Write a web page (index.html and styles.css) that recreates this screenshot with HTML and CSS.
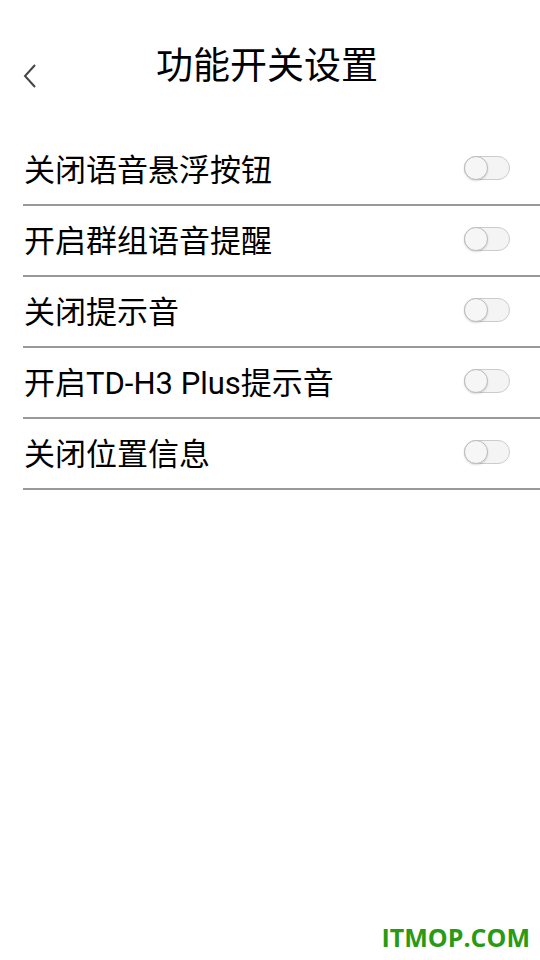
FILE: index.html
```html
<html>

<head>
  <meta charset="utf8">
  <title>功能开关设置</title>
  <link rel="stylesheet" href="styles.css">
</head>

<body>
  <header class="bar">
    <span class="back">
      <svg width="16" height="26" viewBox="0 0 16 26"><path d="M13 2 L3 13 L13 24" fill="none" stroke="#444" stroke-width="2"/></svg>
    </span>
    <h1>功能开关设置</h1>
  </header>
  <ul class="list">
    <li><span>关闭语音悬浮按钮</span><i class="switch"></i></li>
    <li><span>开启群组语音提醒</span><i class="switch"></i></li>
    <li><span>关闭提示音</span><i class="switch"></i></li>
    <li><span>开启TD-H3 Plus提示音</span><i class="switch"></i></li>
    <li><span>关闭位置信息</span><i class="switch"></i></li>
  </ul>
  <div class="mark">ITMOP.COM</div>
</body>

</html>
```

FILE: styles.css
```css
body {
  margin: 0;
  width: 540px;
  height: 960px;
  background: #FFF;
  color: #000;
  font-family: Roboto, "Noto Sans CJK SC", sans-serif;
  position: relative;
  overflow: hidden;
}

.bar {
  display: flex;
  align-items: center;
  height: 135px;
  padding: 0 0 0 22px;
  box-sizing: border-box;
}

.back {
  display: flex;
  margin-top: 16px;
}

.bar h1 {
  flex: 1;
  margin: 0 0 10px -44px;
  text-align: center;
  font-size: 37px;
  font-weight: normal;
  color: #000;
}

.list {
  list-style: none;
  margin: 0 0 0 23px;
  padding: 0;
}

.list li {
  display: flex;
  align-items: center;
  justify-content: space-between;
  height: 69px;
  border-bottom: 2px solid #999;
  font-size: 31px;
}

.list li span {
  margin: -4px 0 0 1px;
}

.switch {
  position: relative;
  width: 44px;
  height: 22px;
  margin: -3px 30px 0 0;
  border: 1px solid #CCC;
  border-radius: 12px;
  background: #F4F4F4;
}

.switch::before {
  content: "";
  position: absolute;
  left: -1px;
  top: -1px;
  width: 22px;
  height: 22px;
  border: 1px solid #BBB;
  border-radius: 50%;
  background: #F6F6F6;
  box-shadow: 0 1px 2px rgba(0, 0, 0, 0.15);
}

.mark {
  position: absolute;
  right: 10px;
  bottom: 6px;
  font: bold 25px "Open Sans", sans-serif;
  color: #2A9A14;
}
```
